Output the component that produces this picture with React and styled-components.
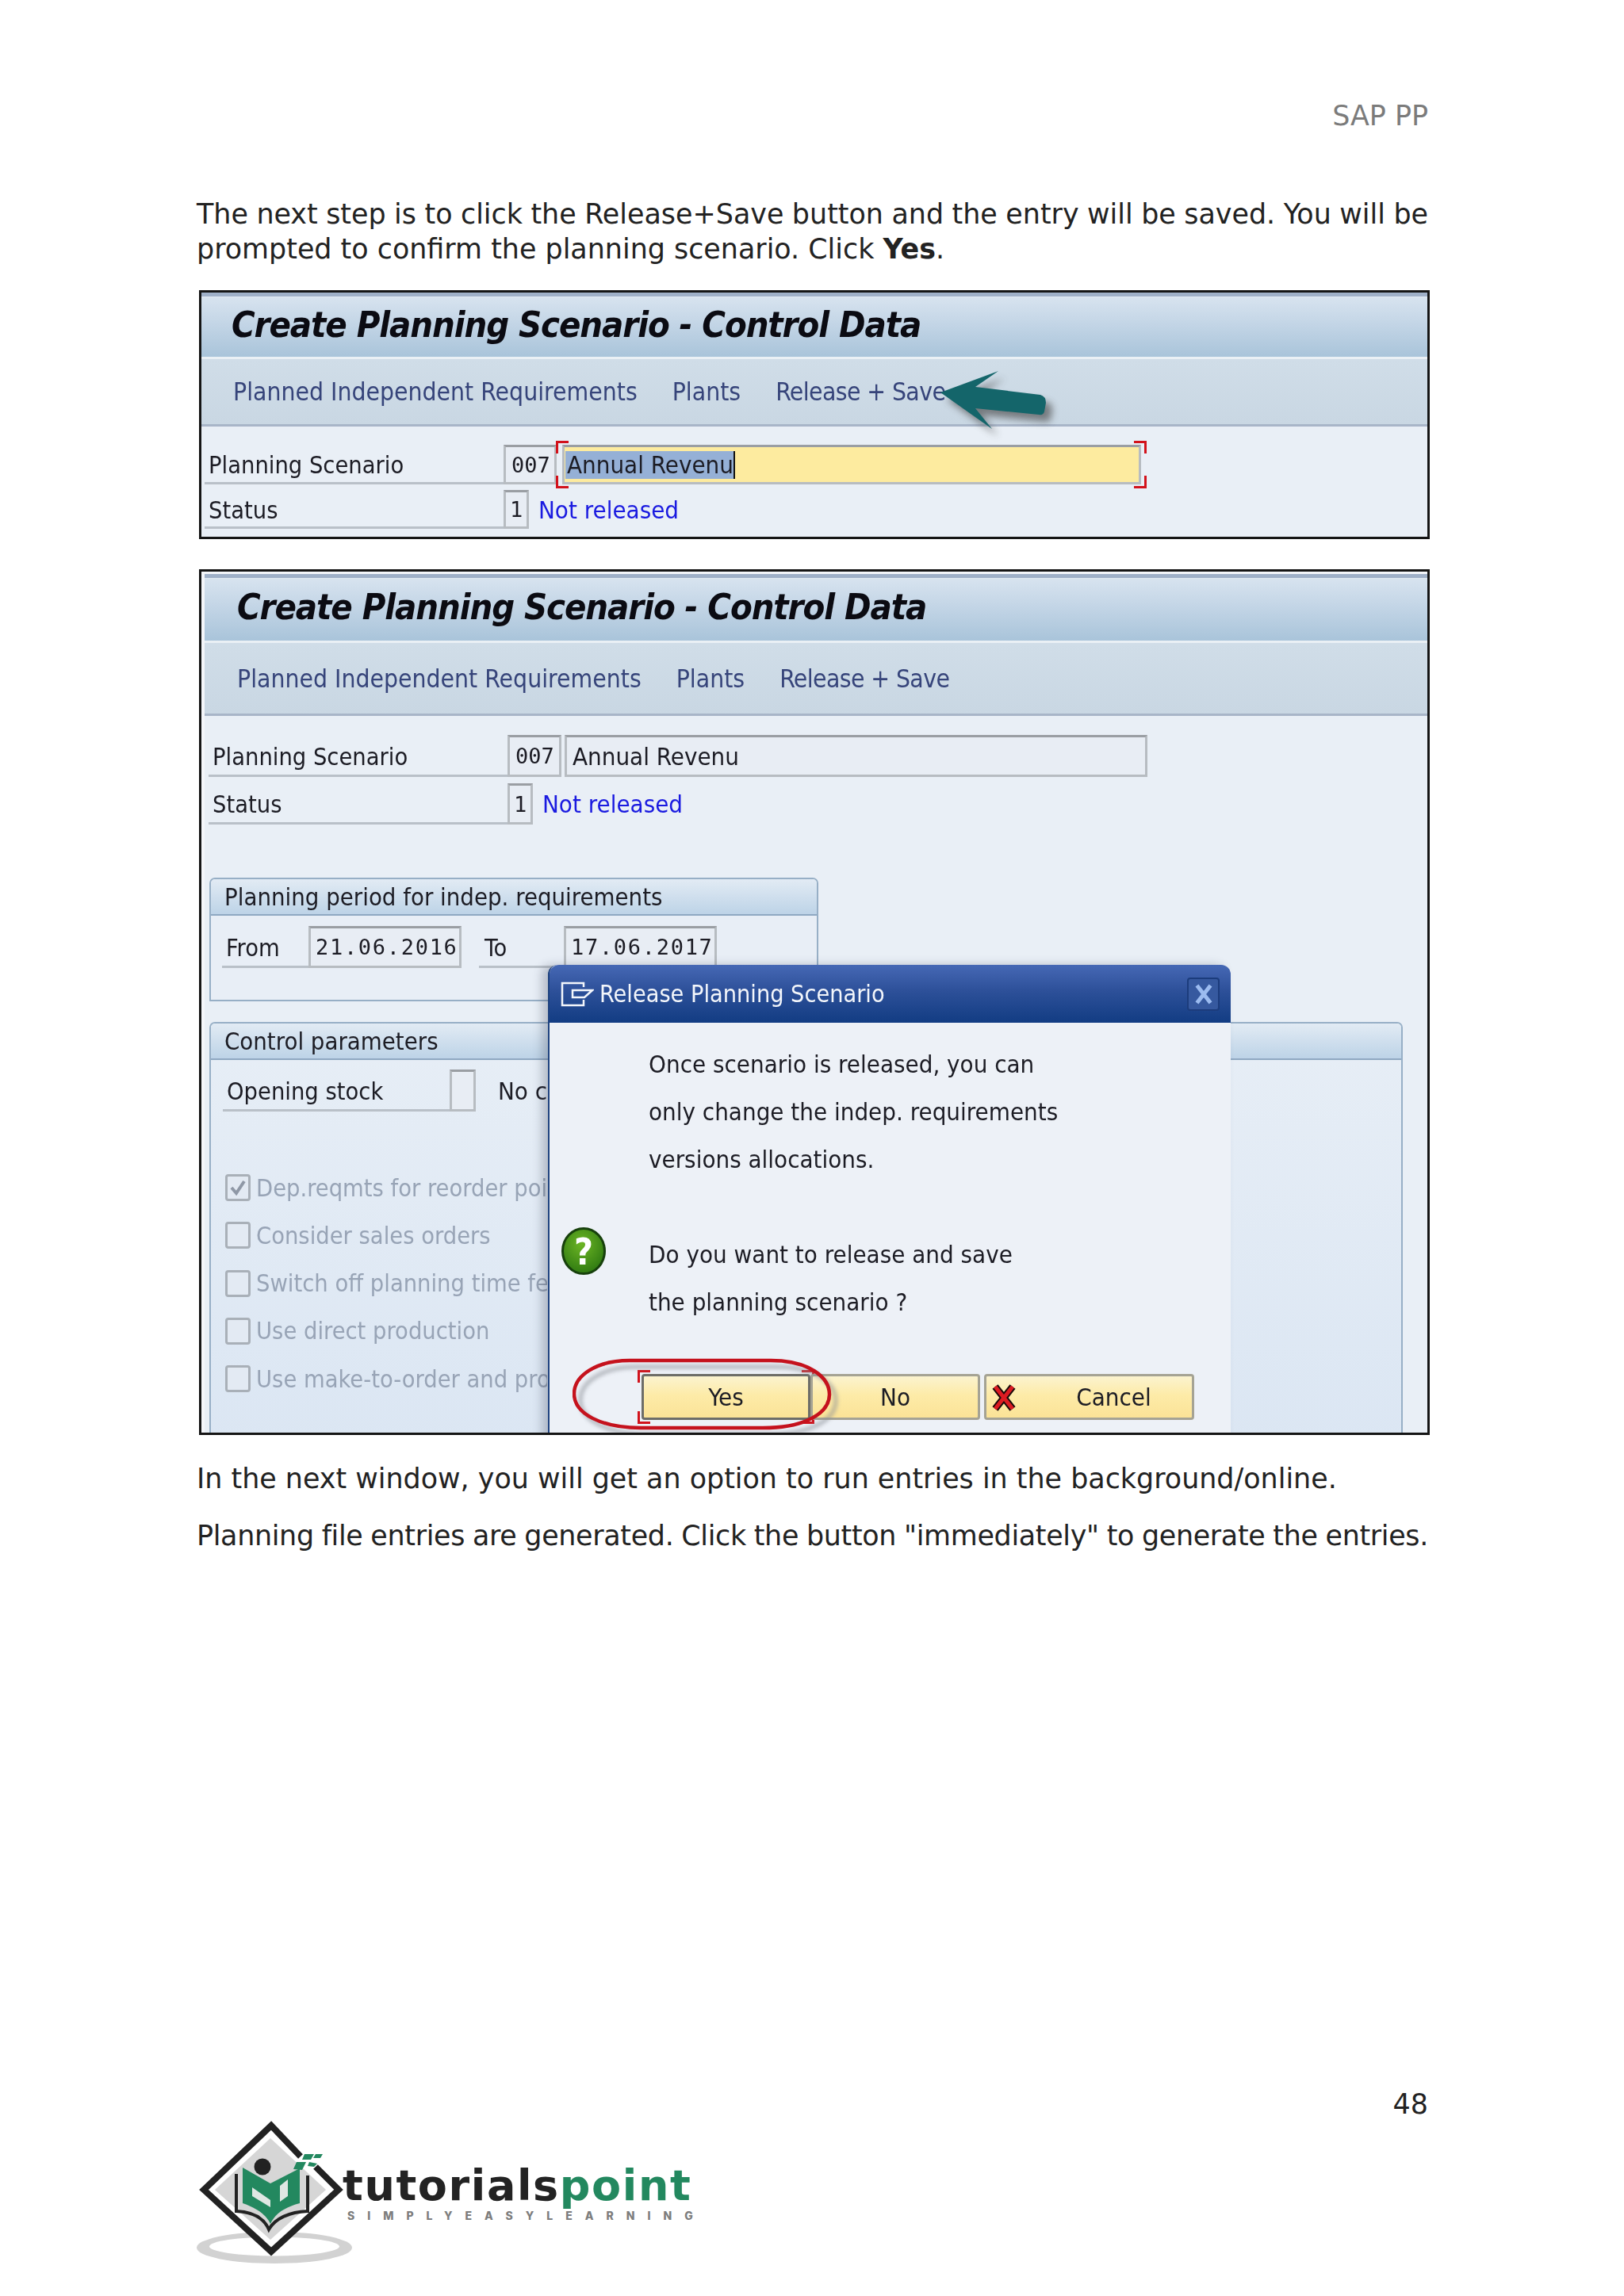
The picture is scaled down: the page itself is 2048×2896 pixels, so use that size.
import styled, { createGlobalStyle } from 'styled-components';

const GlobalStyle = createGlobalStyle`
  body {
    margin: 0;
    background: #fff;
  }
`;

const Page = styled.div`
  width: 2048px;
  height: 2896px;
  box-sizing: border-box;
  padding: 122px 247px 0 248px;
  display: flex;
  flex-direction: column;
  background: #fff;
  font-family: "DejaVu Sans", Verdana, sans-serif;
  font-size: 34.9px;
  color: #222;
  overflow: hidden;
`;

const RunningHead = styled.div`
  height: 48px;
  line-height: 48px;
  text-align: right;
  color: #7b7b7b;
`;

const Para = styled.p`
  margin: ${(p) => p.$top || 0}px 0 0;
  line-height: 44px;
`;

const FullLine = styled.span`
  display: block;
  white-space: nowrap;
  text-align: justify;
  text-align-last: justify;
  word-spacing: ${(p) => p.$ws || 0}px;
  letter-spacing: ${(p) => p.$ls || 0}px;
`;

const Screen = styled.div`
  position: relative;
  box-sizing: border-box;
  width: 1552px;
  height: ${(p) => p.$h}px;
  margin: ${(p) => p.$top}px 0 0 3px;
  border: 3px solid #151515;
  overflow: hidden;
  background: #f4f6fa;
  font-family: "DejaVu Sans", sans-serif;
  font-stretch: condensed;
  font-size: 31px;
  color: #1c1c24;
  filter: blur(0.5px);
`;

const Inner = styled.div`
  padding: ${(p) => p.$pad};
`;

const TopStrip = styled.div`
  height: 5px;
  background: #9fb0c8;
  border-bottom: 1px solid #e2eaf2;
`;

const TitleBar = styled.div`
  height: ${(p) => p.$h}px;
  box-sizing: border-box;
  padding: 0 0 7px ${(p) => p.$left}px;
  display: flex;
  align-items: center;
  background: linear-gradient(#d7e3ef, #c3d5e6 45%, #a9c4da);
  border-bottom: 3px solid #eaf0f5;
  font-weight: bold;
  font-style: italic;
  font-size: 45px;
  letter-spacing: -1.1px;
  color: #0b0b12;
`;

const NavBar = styled.div`
  height: ${(p) => p.$h}px;
  box-sizing: border-box;
  padding-left: ${(p) => p.$left}px;
  display: flex;
  align-items: center;
  gap: 44px;
  background: linear-gradient(#d0dde8, #c9d7e3);
  border-bottom: 3px solid #a8b5c8;
  font-size: 31.6px;
  color: #36447a;
`;

const NavItem = styled.span`
  letter-spacing: ${(p) => p.$ls || 0}px;
`;

const Content = styled.div`
  padding: ${(p) => p.$pad};
  background: #e9eff6;
  min-height: 900px;
`;

const Row = styled.div`
  display: flex;
  align-items: flex-end;
  height: ${(p) => p.$h}px;
  margin-top: ${(p) => p.$top || 0}px;
`;

const Label = styled.div`
  box-sizing: border-box;
  width: ${(p) => p.$w}px;
  height: 100%;
  margin-left: ${(p) => p.$left || 0}px;
  padding: 4px 0 0 ${(p) => p.$pad || 5}px;
  display: flex;
  align-items: center;
  border-bottom: 3px solid #b9c0c8;
  font-size: 30.5px;
`;

const Field = styled.div`
  position: relative;
  box-sizing: border-box;
  width: ${(p) => p.$w}px;
  height: 100%;
  margin-left: ${(p) => p.$left || 0}px;
  padding-left: ${(p) => p.$pad || 7}px;
  display: flex;
  align-items: center;
  border: 3px solid #b7bcc1;
  border-top-color: #9a9ea3;
  background: ${(p) => (p.$active ? '#fdeb9f' : '#e8edf4')};
  white-space: nowrap;
`;

const Mono = styled.span`
  font-family: "DejaVu Sans Mono", monospace;
  font-stretch: normal;
  font-size: 27px;
  letter-spacing: ${(p) => p.$gap || 0}px;
`;

const Selected = styled.span`
  background: #95b0d6;
  border-right: 2px solid #111;
  height: 35px;
  line-height: 35px;
  padding-left: 2px;
`;

const StatusText = styled.div`
  align-self: center;
  margin-left: 12px;
  color: #1a1ae0;
`;

const Corner = styled.i`
  position: absolute;
  width: 13px;
  height: 13px;
  border: solid #d2121b;
  border-width: ${(p) => (p.$y === 'top' ? '3px' : '0')} ${(p) => (p.$x === 'right' ? '3px' : '0')} ${(p) => (p.$y === 'bottom' ? '3px' : '0')} ${(p) => (p.$x === 'left' ? '3px' : '0')};
  ${(p) => p.$y}: -${(p) => p.$dy}px;
  ${(p) => p.$x}: -${(p) => p.$dx}px;
`;

const Arrow = styled.svg`
  position: absolute;
  left: 916px;
  top: 84px;
`;

const Group = styled.div`
  box-sizing: border-box;
  width: ${(p) => p.$w}px;
  height: ${(p) => p.$h}px;
  margin: ${(p) => p.$top}px 0 0 1px;
  border: 2px solid #97afc6;
  border-radius: 7px 7px 0 0;
  background: ${(p) => p.$bg};
`;

const GroupHead = styled.div`
  height: 46px;
  box-sizing: border-box;
  padding-left: 17px;
  display: flex;
  align-items: center;
  background: linear-gradient(#e2ebf4, #bdd3e7);
  border-bottom: 2px solid #8fa8c2;
  border-radius: 5px 5px 0 0;
  font-size: 30.8px;
`;

const GroupBody = styled.div`
  padding: ${(p) => p.$pad};
`;

const CheckList = styled.div`
  margin-top: 79px;
  padding-left: 18px;
  display: flex;
  flex-direction: column;
  gap: 26.3px;
  color: #98a4b6;
  font-size: 30.5px;
`;

const CheckRow = styled.div`
  display: flex;
  align-items: center;
  gap: 7px;
  height: 34px;
`;

const CheckBox = styled.span`
  box-sizing: border-box;
  width: 32px;
  height: 34px;
  flex: none;
  display: flex;
  align-items: center;
  justify-content: center;
  border: 3px solid #a9b0b8;
  border-radius: 4px;
  background: #e3eaf3;
`;

const ClipText = styled.span`
  width: 367px;
  overflow: hidden;
  white-space: nowrap;
`;

const NoteText = styled.div`
  align-self: center;
  margin-left: 28px;
  width: 61px;
  overflow: hidden;
  white-space: nowrap;
`;

const Dialog = styled.div`
  position: absolute;
  left: 437px;
  top: 496px;
  width: 859px;
  height: 700px;
  background: #edf1f7;
  border-radius: 12px 12px 0 0;
  border-left: 2px solid #1f427f;
  box-shadow: -8px 0 12px rgba(60, 70, 90, 0.28);
`;

const DialogHead = styled.div`
  height: 73px;
  box-sizing: border-box;
  padding: 0 14px 0 14px;
  display: flex;
  align-items: center;
  gap: 7px;
  border-radius: 12px 12px 0 0;
  background: linear-gradient(#4668b5, #2d5099 45%, #123c83);
  color: #f3f6fb;
  font-size: 30.3px;
`;

const DialogTitle = styled.div`
  flex: 1;
`;

const CloseButton = styled.div`
  box-sizing: border-box;
  width: 41px;
  height: 42px;
  display: flex;
  align-items: center;
  justify-content: center;
  border: 2px solid #1c3c7c;
  border-radius: 4px;
  background: #36599f;
`;

const DialogBody = styled.div`
  display: grid;
  grid-template-columns: 125px 1fr;
  padding-top: 22px;
`;

const IconCell = styled.div`
  padding: 236px 0 0 15px;
`;

const MessageLine = styled.div`
  height: 60px;
  line-height: 60px;
  white-space: nowrap;
`;

const ButtonRow = styled.div`
  position: relative;
  display: flex;
  margin-top: 61px;
  padding-left: 116px;
`;

const SapButton = styled.div`
  position: relative;
  box-sizing: border-box;
  width: ${(p) => p.$w}px;
  height: 58px;
  margin-left: ${(p) => p.$left || 0}px;
  display: flex;
  align-items: center;
  justify-content: center;
  border: 3px solid ${(p) => (p.$focus ? '#6d6d68' : '#a5a394')};
  border-radius: 4px;
  background: linear-gradient(#fbf3cf, #fdeba8 45%, #fbe397);
`;

const CancelIcon = styled.svg`
  position: absolute;
  left: 7px;
  top: 8px;
`;

const CancelLabel = styled.span`
  margin-left: 62px;
`;

const Ring = styled.svg`
  position: absolute;
  left: 29px;
  top: -20px;
`;

const PageNumber = styled.div`
  height: 44px;
  line-height: 44px;
  margin-top: ${(p) => p.$top}px;
  text-align: right;
`;

const Footer = styled.div`
  display: flex;
  margin-top: -4px;
`;

const LogoMark = styled.svg`
  flex: none;
  overflow: visible;
  filter: blur(0.5px);
`;

const Brand = styled.div`
  margin: 56px 0 0 -6px;
  display: flex;
  flex-direction: column;
`;

const BrandName = styled.div`
  height: 60px;
  font-size: 54px;
  font-weight: bold;
  line-height: 57px;
  letter-spacing: 1.6px;
  color: #232323;
  white-space: nowrap;
`;

const BrandAccent = styled.span`
  color: #23885f;
`;

const BrandTag = styled.div`
  margin-left: 6px;
  font-family: Inter, sans-serif;
  font-size: 14px;
  font-weight: 800;
  line-height: 14px;
  letter-spacing: 16px;
  color: #7d7d7d;
  white-space: nowrap;
`;

const TealArrow = () => (
  <Arrow width="180" height="110" viewBox="1170 455 180 110">
    <defs>
      <filter id="arrowBlur" x="-20%" y="-20%" width="140%" height="140%">
        <feGaussianBlur stdDeviation="5" />
      </filter>
    </defs>
    <path d="M1186 497 L1259 470 L1230 490 L1312 500 Q1319 502 1319 510 L1317 521 Q1316 526 1310 525 L1230 517 L1251 543 Z" transform="translate(8 9)" fill="#4a4a4a" opacity="0.65" filter="url(#arrowBlur)" />
    <path d="M1186 497 L1259 470 L1230 490 L1312 500 Q1319 502 1319 510 L1317 521 Q1316 526 1310 525 L1230 517 L1251 543 Z" fill="#14656a" />
  </Arrow>
);

const ReleaseIcon = () => (
  <svg width="42" height="32" viewBox="0 0 42 32" fill="none" stroke="#f3f6fb" strokeWidth="2.5">
    <path d="M29 7 V2 H2 V30 H29 V23" />
    <path d="M15 11 H40 L30 20 H15 Z" />
  </svg>
);

const CloseIcon = () => (
  <svg width="22" height="26" viewBox="0 0 22 26" stroke="#9cbcf0" strokeWidth="5" strokeLinecap="square">
    <path d="M4 4 L18 22 M18 4 L4 22" />
  </svg>
);

const QuestionIcon = () => (
  <svg width="56" height="60" viewBox="0 0 56 60">
    <defs>
      <radialGradient id="greenBall" cx="45%" cy="35%" r="70%">
        <stop offset="0%" stopColor="#6cb524" />
        <stop offset="100%" stopColor="#2b7610" />
      </radialGradient>
    </defs>
    <ellipse cx="28" cy="30" rx="26.5" ry="28.5" fill="url(#greenBall)" stroke="#17400c" strokeWidth="3" />
    <text x="28" y="47" textAnchor="middle" fontFamily="DejaVu Sans, sans-serif" fontWeight="bold" fontSize="46" fill="#fff">?</text>
  </svg>
);

const RedCross = () => (
  <CancelIcon width="30" height="38" viewBox="0 0 30 38">
    <path d="M4 5 L26 33 M26 5 L4 33" stroke="#1a0a0a" strokeWidth="9" />
    <path d="M4 5 L26 33 M26 5 L4 33" stroke="#dc1b22" strokeWidth="5" />
  </CancelIcon>
);

const YesRing = () => {
  const outline = 'M72 3 H250 C298 3 324 24 324 46 C324 70 292 88 240 88 H86 C36 88 2 70 2 45 C2 22 30 3 72 3 Z';
  return (
    <Ring width="345" height="108" viewBox="0 0 345 108">
      <defs>
        <filter id="ringBlur" x="-5%" y="-20%" width="110%" height="140%">
          <feGaussianBlur stdDeviation="2.5" />
        </filter>
      </defs>
      <path d={outline} transform="translate(8 8)" fill="none" stroke="#8b8f96" strokeWidth="5" opacity="0.6" filter="url(#ringBlur)" />
      <path d={outline} fill="none" stroke="#c5121d" strokeWidth="4.5" />
    </Ring>
  );
};

const Logo = () => (
  <LogoMark width="190" height="185" viewBox="247 2670 190 185">
    <ellipse cx="345" cy="2833" rx="98" ry="20" fill="#d2d2d2" />
    <ellipse cx="345" cy="2831.5" rx="82" ry="12" fill="#fff" />
    <path d="M341 2679 L426 2760 L341 2838 L256 2760 Z" fill="#fff" />
    <path d="M340 2695 L410 2760 L340 2823 L270 2760 Z" fill="#d6d6d6" />
    <path d="M378 2718 L341 2679 L256 2760 L341 2838 L426 2760 L397 2731" fill="none" stroke="#222" strokeWidth="8" />
    <circle cx="330" cy="2731" r="10.5" fill="#222" />
    <path d="M297 2740 V2787 C318 2788 332 2796 338 2810 C346 2796 364 2788 387 2787 V2742" fill="none" stroke="#222" strokeWidth="4" />
    <path d="M305 2732 L340 2752 L377 2733 V2777 C358 2782 346 2790 340 2803 C334 2790 320 2782 305 2777 Z" fill="#23885f" />
    <path d="M317 2757 L340 2773 V2782 L317 2768 Z M352 2755 L362 2747 V2768 L352 2775 Z" fill="#dfe7e3" />
    <path d="M383 2715 L395 2715 L391 2722 L380 2722 Z M397 2715 L406 2715 L403 2720 L394 2720 Z M373 2725 L385 2725 L380 2735 L369 2734 Z M389 2725 L399 2727 L395 2731 L387 2730 Z" fill="#23885f" />
  </LogoMark>
);

const checks = [
  'Dep.reqmts for reorder point',
  'Consider sales orders',
  'Switch off planning time fence',
  'Use direct production',
  'Use make-to-order and production',
];

const App = () => (
  <>
    <GlobalStyle />
    <Page>
      <RunningHead>SAP PP</RunningHead>
      <Para $top={78}>
        <FullLine $ws={-2}>The next step is to click the Release+Save button and the entry will be saved. You will be</FullLine>
        prompted to confirm the planning scenario. Click <b>Yes</b>.
      </Para>

      <Screen $h={314} $top={30}>
        <TopStrip />
        <TitleBar $h={78} $left={38}>Create Planning Scenario - Control Data</TitleBar>
        <NavBar $h={85} $left={40}>
          <NavItem>Planned Independent Requirements</NavItem>
          <NavItem>Plants</NavItem>
          <NavItem $ls={-0.6}>Release + Save</NavItem>
        </NavBar>
        <Content $pad="23px 0 0 4px">
          <Row $h={50}>
            <Label $w={377}>Planning Scenario</Label>
            <Field $w={67}><Mono>007</Mono></Field>
            <Field $w={730} $left={7} $pad={1} $active>
              <Selected>Annual Revenu</Selected>
              <Corner $x="left" $y="top" $dx={11} $dy={8} />
              <Corner $x="left" $y="bottom" $dx={11} $dy={8} />
              <Corner $x="right" $y="top" $dx={10} $dy={8} />
              <Corner $x="right" $y="bottom" $dx={10} $dy={8} />
            </Field>
          </Row>
          <Row $h={49} $top={7}>
            <Label $w={377}>Status</Label>
            <Field $w={32} $pad={5}><Mono>1</Mono></Field>
            <StatusText>Not released</StatusText>
          </Row>
        </Content>
        <TealArrow />
      </Screen>

      <Screen $h={1092} $top={38}>
        <Inner $pad="3px 0 0 4px">
          <TopStrip />
          <TitleBar $h={81} $left={41}>Create Planning Scenario - Control Data</TitleBar>
          <NavBar $h={92} $left={41}>
            <NavItem>Planned Independent Requirements</NavItem>
            <NavItem>Plants</NavItem>
            <NavItem $ls={-0.6}>Release + Save</NavItem>
          </NavBar>
          <Content $pad="24px 0 0 5px">
            <Row $h={53}>
              <Label $w={377}>Planning Scenario</Label>
              <Field $w={68}><Mono>007</Mono></Field>
              <Field $w={735} $left={4}>Annual Revenu</Field>
            </Row>
            <Row $h={52} $top={8}>
              <Label $w={377}>Status</Label>
              <Field $w={32} $pad={5}><Mono>1</Mono></Field>
              <StatusText>Not released</StatusText>
            </Row>
            <Group $w={768} $h={156} $top={67} $bg="#e8eef6">
              <GroupHead>Planning period for indep. requirements</GroupHead>
              <GroupBody $pad="13px 0 0 14px">
                <Row $h={53}>
                  <Label $w={109}>From</Label>
                  <Field $w={193} $pad={6}><Mono $gap={1.7}>21.06.2016</Mono></Field>
                  <Label $w={107} $left={22} $pad={7}>To</Label>
                  <Field $w={193} $pad={6}><Mono $gap={1.7}>17.06.2017</Mono></Field>
                </Row>
              </GroupBody>
            </Group>
            <Group $w={1505} $h={540} $top={26} $bg="linear-gradient(#e7eef6, #dbe6f3)">
              <GroupHead>Control parameters</GroupHead>
              <GroupBody $pad="12px 0 0 15px">
                <Row $h={53}>
                  <Label $w={286}>Opening stock</Label>
                  <Field $w={33} />
                  <NoteText>No check</NoteText>
                </Row>
              </GroupBody>
              <CheckList>
                {checks.map((text, i) => (
                  <CheckRow key={text}>
                    <CheckBox>
                      {i === 0 && (
                        <svg width="22" height="22" viewBox="0 0 22 22" fill="none" stroke="#8f98a6" strokeWidth="4">
                          <path d="M3 11 L9 18 L19 3" />
                        </svg>
                      )}
                    </CheckBox>
                    <ClipText>{text}</ClipText>
                  </CheckRow>
                ))}
              </CheckList>
            </Group>
          </Content>
        </Inner>

        <Dialog>
          <DialogHead>
            <ReleaseIcon />
            <DialogTitle>Release Planning Scenario</DialogTitle>
            <CloseButton><CloseIcon /></CloseButton>
          </DialogHead>
          <DialogBody>
            <IconCell><QuestionIcon /></IconCell>
            <div>
              <MessageLine>Once scenario is released, you can</MessageLine>
              <MessageLine>only change the indep. requirements</MessageLine>
              <MessageLine>versions allocations.</MessageLine>
              <MessageLine />
              <MessageLine>Do you want to release and save</MessageLine>
              <MessageLine>the planning scenario ?</MessageLine>
            </div>
          </DialogBody>
          <ButtonRow>
            <SapButton $w={213} $focus>
              Yes
              <Corner $x="left" $y="top" $dx={8} $dy={8} />
              <Corner $x="left" $y="bottom" $dx={8} $dy={8} />
              <Corner $x="right" $y="top" $dx={8} $dy={8} />
              <Corner $x="right" $y="bottom" $dx={8} $dy={8} />
            </SapButton>
            <SapButton $w={214}>No</SapButton>
            <SapButton $w={265} $left={5}>
              <RedCross />
              <CancelLabel>Cancel</CancelLabel>
            </SapButton>
            <YesRing />
          </ButtonRow>
        </Dialog>
      </Screen>

      <Para $top={33}>In the next window, you will get an option to run entries in the background/online.</Para>
      <Para $top={28}>
        <FullLine $ws={-1} $ls={-0.32}>Planning file entries are generated. Click the button "immediately" to generate the entries.</FullLine>
      </Para>

      <PageNumber $top={673}>48</PageNumber>
      <Footer>
        <Logo />
        <Brand>
          <BrandName>tutorials<BrandAccent>point</BrandAccent></BrandName>
          <BrandTag>SIMPLYEASYLEARNING</BrandTag>
        </Brand>
      </Footer>
    </Page>
  </>
);

export default App;
